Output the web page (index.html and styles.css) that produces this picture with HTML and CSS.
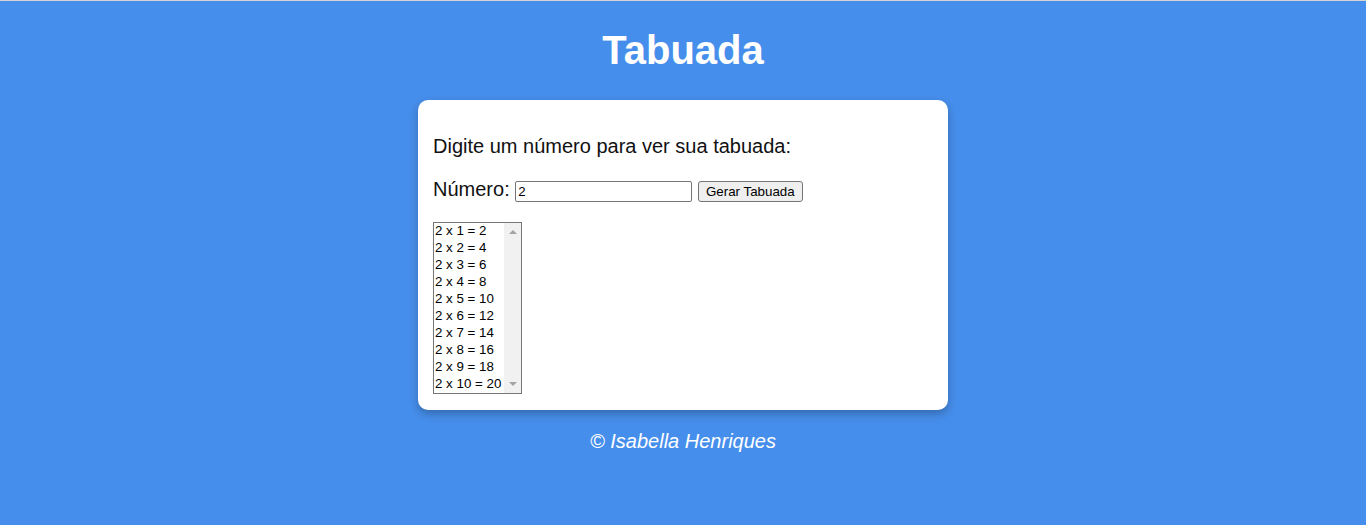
FILE: index.html
```html
<!DOCTYPE html>
<html lang="pt-BR">
<head>
<meta charset="utf-8">
<title>Tabuada</title>
<link rel="stylesheet" href="styles.css">
</head>
<body>
<h1 class="title">Tabuada</h1>
<main class="card">
  <p class="lead">Digite um número para ver sua tabuada:</p>
  <p class="row">Número: <input class="num" type="number" value="2"> <button class="btn" type="button">Gerar Tabuada</button></p>
  <div class="listbox">
    <select class="list" size="10">
      <option>2 x 1 = 2</option>
      <option>2 x 2 = 4</option>
      <option>2 x 3 = 6</option>
      <option>2 x 4 = 8</option>
      <option>2 x 5 = 10</option>
      <option>2 x 6 = 12</option>
      <option>2 x 7 = 14</option>
      <option>2 x 8 = 16</option>
      <option>2 x 9 = 18</option>
      <option>2 x 10 = 20</option>
    </select>
    <div class="scrollbar" aria-hidden="true">
      <span class="arrow up"></span>
      <span class="arrow down"></span>
    </div>
  </div>
</main>
<p class="footer">© Isabella Henriques</p>
</body>
</html>
```

FILE: styles.css
```css
html, body {
  margin: 0;
  padding: 0;
}
body {
  background: #468eeb;
  border-top: 1px solid #d4d4d4;
  font-family: "Liberation Sans", Arial, sans-serif;
  color: #fff;
  min-height: 524px;
}
.title {
  text-align: center;
  font-size: 40px;
  font-weight: bold;
  margin: 27px 0;
  color: #fff;
}
.card {
  width: 500px;
  margin: 0 auto;
  background: #fff;
  color: #111;
  padding: 15px 15px 16px;
  border-radius: 10px;
  box-shadow: 0 4px 8px rgba(0, 0, 0, 0.25);
  font-size: 20px;
}
.lead {
  margin: 20px 0;
}
.row {
  margin: 20px 0;
}
.num {
  font: 13.333px "Liberation Sans", Arial, sans-serif;
  width: 177px;
  height: 21px;
  box-sizing: border-box;
  border: 1px solid #767676;
  border-radius: 2px;
  padding: 1px 2px;
  color: #000;
  -moz-appearance: textfield;
  appearance: textfield;
}
.num::-webkit-inner-spin-button,
.num::-webkit-outer-spin-button {
  -webkit-appearance: none;
  margin: 0;
}
.btn {
  font: 13.333px "Liberation Sans", Arial, sans-serif;
  width: 105px;
  height: 21px;
  padding: 1px 6px;
  border: 1px solid #767676;
  border-radius: 3px;
  background: #efefef;
  color: #000;
}
.listbox {
  display: flex;
  width: 89px;
  height: 172px;
  box-sizing: border-box;
  border: 1px solid #767676;
  background: #fff;
}
.list {
  flex: 1;
  min-width: 0;
  height: 170px;
  font: 13.333px "Liberation Sans", Arial, sans-serif;
  border: 0;
  outline: none;
  color: #000;
  padding: 0;
  overflow: hidden;
  background: #fff;
}
.list option {
  padding: 0 1px;
  height: 17px;
  line-height: 17px;
}
.scrollbar {
  width: 17px;
  background: #f1f1f1;
  display: flex;
  flex-direction: column;
  justify-content: space-between;
  align-items: center;
  padding: 7px 0;
}
.arrow {
  width: 0;
  height: 0;
  border-left: 4px solid transparent;
  border-right: 4px solid transparent;
}
.arrow.up {
  border-bottom: 4px solid #a3a3a3;
}
.arrow.down {
  border-top: 4px solid #a3a3a3;
}
.footer {
  text-align: center;
  font-style: italic;
  font-size: 20px;
  margin: 20px 0;
}
```
